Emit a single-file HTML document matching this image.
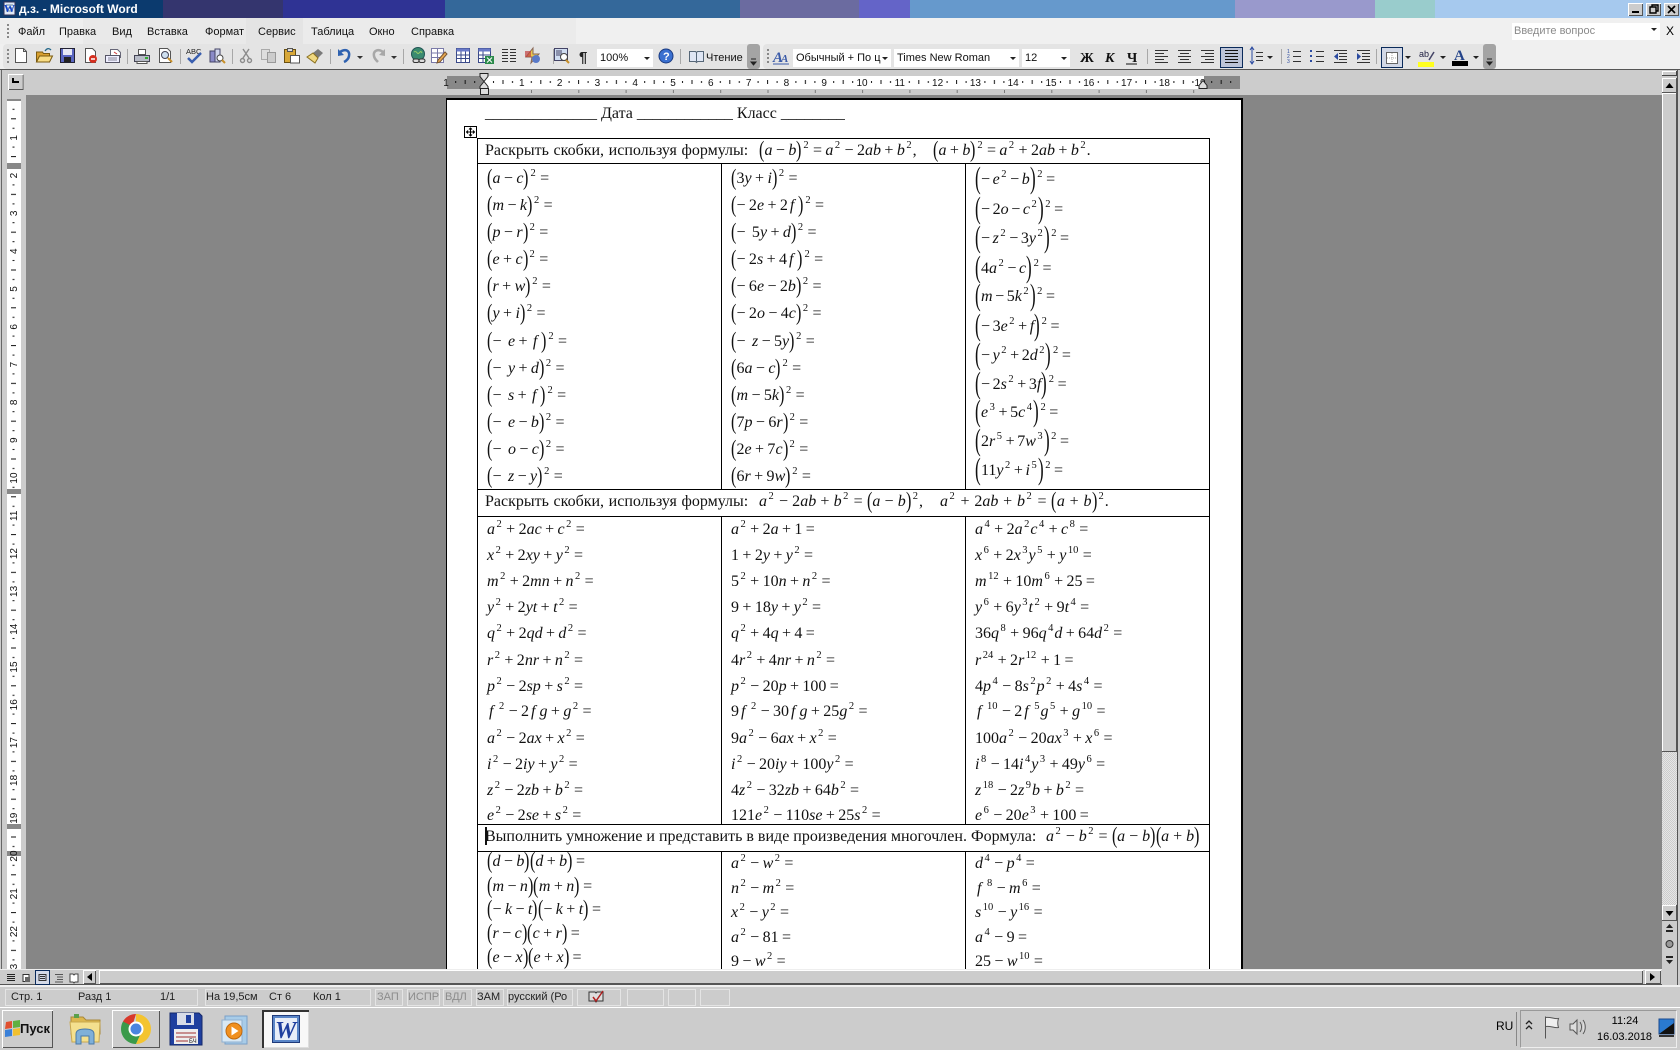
<!DOCTYPE html>
<html lang="ru"><head><meta charset="utf-8"><title>д.з. - Microsoft Word</title>
<style>
html,body{margin:0;padding:0}
body{width:1680px;height:1050px;overflow:hidden;position:relative;background:#ccc;font-family:"Liberation Sans",sans-serif;font-size:11px;color:#000}
.r{position:absolute}
.l{position:absolute;background:#000}
.t{position:absolute;white-space:nowrap}
.f{position:absolute;margin-top:1px;font:16px/20px "Liberation Serif",serif;white-space:nowrap;word-spacing:-.6px;color:#111}
.f sup{font-size:10.5px;line-height:0;vertical-align:7px;margin:0 1px 0 1.5px}
.f u{text-decoration:none;display:inline-block;font-size:23px;line-height:0;width:5.5px;transform:scaleX(.7);transform-origin:0 50%;vertical-align:-2px;font-weight:normal}
.f em{font-style:italic;margin:0 4px 0 2px}
.f s{text-decoration:none;margin-right:3px}
.g{word-spacing:-1.400px}
.g u{font-size:31px;width:6px;transform:scaleX(.55);vertical-align:-4px}
.a,.b,.c{margin-top:2px}
.a{left:487px}.b{left:731px}.c{left:975px}
.st{position:absolute;top:989px;height:15px;border:1px solid #e4e4e4;box-sizing:content-box}
.sx{position:absolute;top:991px;color:#222;font-size:11px;line-height:13px;white-space:nowrap}
.off{color:#8c8c8c}
.mn{position:absolute;top:25px;font-size:11px;line-height:14px;color:#111}
.btn{position:absolute;background:#ccc;box-shadow:inset 1px 1px 0 #fff,inset -1px -1px 0 #555}
.cb{position:absolute;background:#fff;top:49px;height:18px;font-size:11px;line-height:18px;white-space:nowrap;overflow:hidden;color:#111}
</style></head><body>

<!-- title bar -->
<div class="r" style="left:0;top:0;width:163px;height:18px;background:#0b3a6e"></div>
<div class="r" style="left:163px;top:0;width:120px;height:18px;background:#34356e"></div>
<div class="r" style="left:283px;top:0;width:162px;height:18px;background:#2f3394"></div>
<div class="r" style="left:445px;top:0;width:295px;height:18px;background:#34689a"></div>
<div class="r" style="left:740px;top:0;width:119px;height:18px;background:#6b6ba0"></div>
<div class="r" style="left:859px;top:0;width:51px;height:18px;background:#6464c8"></div>
<div class="r" style="left:910px;top:0;width:325px;height:18px;background:#6699cc"></div>
<div class="r" style="left:1235px;top:0;width:140px;height:18px;background:#9999cc"></div>
<div class="r" style="left:1375px;top:0;width:60px;height:18px;background:#99cccc"></div>
<div class="r" style="left:1435px;top:0;width:245px;height:18px;background:#a6c9ee"></div>
<div class="t" style="left:19px;top:1px;color:#fff;font-weight:bold;font-size:12px;line-height:16px">д.з. - Microsoft Word</div>
<div class="btn" style="left:1628px;top:3px;width:15px;height:13px"></div>
<div class="btn" style="left:1646px;top:3px;width:15px;height:13px"></div>
<div class="btn" style="left:1664px;top:3px;width:15px;height:13px"></div>

<!-- menu row and toolbars -->
<div class="r" style="left:0;top:18px;width:1680px;height:52px;background:#f0f0f0"></div>
<div class="r" style="left:0;top:18px;width:83px;height:26px;background:#eee"></div>
<div class="r" style="left:83px;top:18px;width:163px;height:26px;background:#e9e9e9"></div>
<div class="r" style="left:246px;top:18px;width:57px;height:26px;background:#e4e4e4"></div>
<div class="r" style="left:303px;top:18px;width:273px;height:26px;background:#ebebeb"></div>
<div class="r" style="left:3px;top:44px;width:757px;height:25px;background:#e4e4e4;border-radius:4px"></div>
<div class="r" style="left:747px;top:44px;width:13px;height:25px;background:#a4a4a4;border-radius:3px"></div>
<div class="r" style="left:763px;top:44px;width:733px;height:25px;background:#e4e4e4;border-radius:4px"></div>
<div class="r" style="left:1483px;top:44px;width:13px;height:25px;background:#a4a4a4;border-radius:3px"></div>

<div class="mn" style="left:18px">Файл</div>
<div class="mn" style="left:59px">Правка</div>
<div class="mn" style="left:112px">Вид</div>
<div class="mn" style="left:147px">Вставка</div>
<div class="mn" style="left:205px">Формат</div>
<div class="mn" style="left:258px">Сервис</div>
<div class="mn" style="left:311px">Таблица</div>
<div class="mn" style="left:369px">Окно</div>
<div class="mn" style="left:411px">Справка</div>
<div class="r" style="left:1512px;top:23px;width:148px;height:17px;background:#fff"></div>
<div class="t" style="left:1514px;top:24px;color:#8a8a8a;line-height:15px">Введите вопрос</div>
<div class="t" style="left:1666px;top:24px;line-height:15px;font-size:12px">X</div>

<div class="cb" style="left:597px;width:56px;padding-left:3px;box-sizing:border-box">100%</div>
<div class="t" style="left:706px;top:50px;line-height:16px;color:#111">Чтение</div>
<div class="cb" style="left:793px;width:98px;padding-left:3px;box-sizing:border-box">Обычный + По ц</div>
<div class="cb" style="left:894px;width:125px;padding-left:3px;box-sizing:border-box">Times New Roman</div>
<div class="cb" style="left:1022px;width:48px;padding-left:3px;box-sizing:border-box">12</div>

<svg class="r" style="left:0;top:0" width="1680" height="70" xmlns="http://www.w3.org/2000/svg">
<!-- title icon and buttons -->
<g transform="translate(3,1)"><rect x="1" y="1" width="11" height="13" fill="#dfe8f8" stroke="#335"/><path d="M3 4h7M3 7h7M3 10h7" stroke="#689"/><text x="1" y="11" font-family="Liberation Serif" font-weight="bold" font-size="11" fill="#14c">W</text></g>
<path d="M1632 12h7" stroke="#000" stroke-width="2"/>
<path d="M1650 7h6v6h-6zM1652 7V5h6v6h-2" fill="none" stroke="#000" stroke-width="1.4"/>
<path d="M1668 6l7 7m0-7l-7 7" stroke="#000" stroke-width="1.6"/>
<!-- grips -->
<g fill="#888"><rect x="7" y="24" width="2" height="2"/><rect x="7" y="28" width="2" height="2"/><rect x="7" y="32" width="2" height="2"/><rect x="7" y="36" width="2" height="2"/>
<rect x="7" y="49" width="2" height="2"/><rect x="7" y="53" width="2" height="2"/><rect x="7" y="57" width="2" height="2"/><rect x="7" y="61" width="2" height="2"/>
<rect x="767" y="49" width="2" height="2"/><rect x="767" y="53" width="2" height="2"/><rect x="767" y="57" width="2" height="2"/><rect x="767" y="61" width="2" height="2"/></g>
<path d="M751 62h5l-2.5 3zM751 59h5M1487 62h5l-2.5 3zM1487 59h5" stroke="#222" fill="#222"/>
<!-- separators -->
<g stroke="#a8a8a8"><path d="M127.500 49v15M180.500 49v15M232.500 49v15M330.500 49v15M403.500 49v15M680.500 49v15M1147.500 49v15M1281.500 49v15M1376.500 49v15M553.500 49v15"/></g>
<!-- new -->
<g transform="translate(14,48)"><path d="M1.500.5h8l3 3v11h-11z" fill="#fff" stroke="#555"/><path d="M9.500.5v3h3" fill="none" stroke="#555"/></g>
<!-- open -->
<g transform="translate(36,48)"><path d="M.5 14V4h6l1 1.500h6V14z" fill="#d8a030" stroke="#7a5a10"/><path d="M.5 14l3-6h13l-3 6z" fill="#f8dc84" stroke="#7a5a10"/><path d="M9 3c2-3 4-3 6-1" fill="none" stroke="#268" stroke-width="1.300"/></g>
<!-- save -->
<g transform="translate(60,48)"><rect x=".5" y=".5" width="14" height="14" fill="#5a66c0" stroke="#223"/><rect x="3" y="1" width="9" height="6" fill="#e6e8f4"/><rect x="4" y="9" width="7" height="5" fill="#222"/></g>
<!-- perm -->
<g transform="translate(84,48)"><path d="M1.500.5h7l3 3v11h-10z" fill="#fff" stroke="#555"/><circle cx="9" cy="11" r="4" fill="#d43020"/><path d="M7 11h4" stroke="#fff" stroke-width="1.500"/></g>
<!-- mail -->
<g transform="translate(105,48)"><path d="M5.500 1.500h7l3 3v5h-10z" fill="#fff" stroke="#667"/><path d="M9 4l3 2" stroke="#c33"/><rect x=".5" y="7.500" width="14" height="7" fill="#eef" stroke="#556"/><path d="M3 10h9M3 12h9" stroke="#889"/></g>
<!-- print -->
<g transform="translate(134,48)"><path d="M4.500 1.500h7v5h-7z" fill="#fff" stroke="#555"/><path d="M.5 7.500h15v6h-15z" fill="#b8bcc8" stroke="#445"/><path d="M3 13.500h10v2H3z" fill="#fff" stroke="#555"/><rect x="11" y="9" width="3" height="2" fill="#3a3"/></g>
<!-- preview -->
<g transform="translate(158,48)"><path d="M1.500.5h8l3 3v11h-11z" fill="#fff" stroke="#555"/><circle cx="7" cy="7" r="3.500" fill="#cfe0f0" stroke="#445"/><path d="M10 10l4 4" stroke="#c8902a" stroke-width="2"/></g>
<!-- spell -->
<g transform="translate(186,47)"><text x="0" y="7" font-family="Liberation Sans" font-size="7.500" fill="#222">ABC</text><path d="M2 11l4 4 9-9" fill="none" stroke="#3a5fb0" stroke-width="2.500"/></g>
<!-- research -->
<g transform="translate(209,48)"><rect x="1" y="3" width="5" height="11" fill="#8a8ac8" stroke="#446"/><rect x="6" y="1" width="5" height="13" fill="#cfd4ec" stroke="#446"/><circle cx="11" cy="10" r="3" fill="#fff" stroke="#444"/><path d="M13 12l3 3" stroke="#c8902a" stroke-width="2"/></g>
<!-- cut -->
<g transform="translate(240,48)" fill="none" stroke="#8c8c8c" stroke-width="1.400"><path d="M3 1l6 9M9 1L3 10"/><circle cx="2.500" cy="12.500" r="2"/><circle cx="9.500" cy="12.500" r="2"/></g>
<!-- copy -->
<g transform="translate(261,48)"><rect x=".5" y="1.500" width="8" height="10" fill="#ddd" stroke="#aaa"/><rect x="6.500" y="4.500" width="8" height="10" fill="#ccc" stroke="#999"/></g>
<!-- paste -->
<g transform="translate(284,48)"><rect x=".5" y="1.500" width="11" height="13" fill="#d8a838" stroke="#6a5010"/><rect x="3.500" y=".5" width="5" height="3" fill="#ddd" stroke="#555"/><rect x="6.500" y="7.500" width="9" height="7.500" fill="#fff" stroke="#555"/></g>
<!-- painter -->
<g transform="translate(307,48)"><path d="M11 1l5 4-5 5-5-5z" fill="#7a7a7a"/><path d="M6 5l5 5-3 5-8-6z" fill="#f0d880" stroke="#8a7020"/></g>
<!-- undo -->
<g transform="translate(337,48)"><path d="M3 4c6-4 10-1 9 4-.5 3-3 5-5 6" fill="none" stroke="#2f62b0" stroke-width="2.500"/><path d="M1 1l0 7 6-1z" fill="#2f62b0"/></g>
<path d="M357 56h6l-3 3zM391 56h6l-3 3z" fill="#333"/>
<!-- redo -->
<g transform="translate(372,48)"><path d="M11 4C6 0 1 3 2 8c.5 3 3 5 4 6" fill="none" stroke="#a8a8a8" stroke-width="2.500"/><path d="M13 1v7l-6-1z" fill="#a8a8a8"/></g>
<!-- hyperlink -->
<g transform="translate(411,47)"><circle cx="7" cy="7" r="6.500" fill="#3a8a70" stroke="#255"/><path d="M3 5c3-2 3 3 5 1s2-2 3 0" fill="none" stroke="#9c6"/><rect x="2" y="12" width="6" height="3.500" rx="1.700" fill="#ddd" stroke="#333"/><rect x="8" y="12" width="6" height="3.500" rx="1.700" fill="#ddd" stroke="#333"/></g>
<!-- tables & borders -->
<g transform="translate(431,48)"><path d="M.5.5h12v14H.5zM.5 5h12M.5 9.500h12M6.500.5v14" fill="#fff" stroke="#7a7aa8"/><path d="M7 12l7-8 2 2-7 8-3 1z" fill="#e8a850" stroke="#753"/></g>
<!-- table -->
<g transform="translate(456,48)"><path d="M.5.5h13v14H.5z" fill="#fff" stroke="#3a4a8a"/><path d="M.5.5h13v3H.5z" fill="#6a7ac8"/><path d="M.5 7h13M.5 10.500h13M5 3.500v11M9.500 3.500v11" stroke="#3a4a8a"/></g>
<!-- excel -->
<g transform="translate(478,48)"><path d="M.5.5h12v14H.5z" fill="#fff" stroke="#3a4a8a"/><path d="M.5.5h12v3H.5z" fill="#6a7ac8"/><path d="M.5 7h12M.5 10.500h12M5 3.500v11" stroke="#3a4a8a"/><rect x="7" y="8" width="9" height="8" fill="#2a8a4a"/><path d="M9 9.500l5 5m0-5l-5 5" stroke="#fff"/></g>
<!-- columns -->
<g transform="translate(502,49)" stroke="#333"><path d="M0 .5h6M8 .5h6M0 3.500h6M8 3.500h6M0 6.500h6M8 6.500h6M0 9.500h6M8 9.500h6M0 12.500h6M8 12.500h6"/></g>
<!-- drawing -->
<g transform="translate(525,48)"><path d="M8 0l-7 9h6l-1 6 8-9H8z" fill="#e8c850" stroke="#865"/><circle cx="11" cy="11" r="4" fill="#5a7ac8"/><rect x="0" y="3" width="6" height="6" fill="#c04040" opacity=".7"/></g>
<!-- doc map -->
<g transform="translate(554,48)"><rect x=".5" y=".5" width="13" height="12" fill="#cfdcf0" stroke="#446"/><path d="M2 3h6M2 5h6M2 7h6" stroke="#446"/><circle cx="10" cy="9" r="3.500" fill="#fff" stroke="#444"/><path d="M12 12l3 3" stroke="#c8902a" stroke-width="2"/></g>
<text x="579" y="62" font-family="Liberation Sans" font-size="15" font-weight="bold" fill="#222">¶</text>
<path d="M644 57h6l-3 3z" fill="#222"/>
<!-- help -->
<circle cx="666" cy="56" r="7" fill="#3a70d0" stroke="#1a3a80"/><text x="663" y="60" font-family="Liberation Sans" font-size="11" font-weight="bold" fill="#fff">?</text>
<!-- reading -->
<g transform="translate(689,50)"><path d="M.5 1.500h6l1 1 1-1h6v10h-6l-1 1-1-1h-6z" fill="#dfe6f4" stroke="#567"/><path d="M7.500 2.500v9" stroke="#567"/></g>
<!-- style AA -->
<text x="773" y="62" font-family="Liberation Serif" font-style="italic" font-size="15" font-weight="bold" fill="#3a5aa8">A</text><text x="781" y="62" font-family="Liberation Serif" font-style="italic" font-size="11" font-weight="bold" fill="#3a5aa8">A</text><path d="M773 64h16" stroke="#3a5aa8"/>
<path d="M882 57h6l-3 3zM1010 57h6l-3 3zM1061 57h6l-3 3z" fill="#222"/>
<!-- B I U -->
<text x="1080" y="62" font-family="Liberation Serif" font-size="14" font-weight="bold" fill="#111">Ж</text>
<text x="1105" y="62" font-family="Liberation Serif" font-size="14" font-weight="bold" font-style="italic" fill="#111">К</text>
<text x="1127" y="62" font-family="Liberation Serif" font-size="14" font-weight="bold" fill="#111">Ч</text><path d="M1126 64h11" stroke="#111"/>
<!-- align -->
<g stroke="#333"><path d="M1155 50.500h13M1155 53.500h9M1155 56.500h13M1155 59.500h9M1155 62.500h13"/>
<path d="M1178 50.500h13M1180 53.500h9M1178 56.500h13M1180 59.500h9M1178 62.500h13"/>
<path d="M1201 50.500h13M1205 53.500h9M1201 56.500h13M1205 59.500h9M1201 62.500h13"/></g>
<rect x="1220.500" y="47.500" width="22" height="20" fill="#bcc4d8" stroke="#0a2a5a"/>
<path d="M1225 50.500h13M1225 53.500h13M1225 56.500h13M1225 59.500h13M1225 62.500h13" stroke="#111"/>
<!-- line spacing -->
<path d="M1250 50l2-3 2 3M1252 48v16M1250 61l2 3 2-3" fill="none" stroke="#2a4aa0"/><path d="M1256 52.500h7M1256 56.500h7M1256 60.500h7" stroke="#333"/><path d="M1267 56h6l-3 3z" fill="#222"/>
<!-- lists -->
<path d="M1293 51.500h8M1293 56.500h8M1293 61.500h8M1316 51.500h8M1316 56.500h8M1316 61.500h8" stroke="#333"/>
<g font-family="Liberation Sans" font-size="5" fill="#2a4aa0"><text x="1287" y="53">1</text><text x="1287" y="58">2</text><text x="1287" y="63">3</text></g>
<g fill="#2a4aa0"><rect x="1310" y="50" width="2" height="2"/><rect x="1310" y="55" width="2" height="2"/><rect x="1310" y="60" width="2" height="2"/></g>
<!-- outdent indent -->
<path d="M1334 50.500h13M1339 53.500h8M1339 56.500h8M1339 59.500h8M1334 62.500h13M1357 50.500h13M1362 53.500h8M1362 56.500h8M1362 59.500h8M1357 62.500h13" stroke="#333"/>
<path d="M1338 53l-4 3.500 4 3.500zM1357 53l4 3.500-4 3.500z" fill="#2a4aa0"/>
<!-- borders -->
<rect x="1381.500" y="47.500" width="21" height="20" fill="#d2d8e6" stroke="#0a2a5a"/><rect x="1386.500" y="52.500" width="11" height="11" fill="#fff" stroke="#666"/><path d="M1392 53v10M1387 58h10" stroke="#aaa" stroke-dasharray="1 1"/><path d="M1405 56h6l-3 3z" fill="#222"/>
<!-- highlight -->
<rect x="1418" y="62" width="16" height="5" fill="#ffff20"/><text x="1419" y="57" font-family="Liberation Sans" font-size="9" fill="#224">ab</text><path d="M1429 60l5-8" stroke="#446" stroke-width="1.500"/><path d="M1440 56h6l-3 3z" fill="#222"/>
<!-- font color -->
<text x="1454" y="60" font-family="Liberation Serif" font-size="15" font-weight="bold" fill="#24448a">A</text><rect x="1452" y="61" width="16" height="5" fill="#000"/><path d="M1473 56h6l-3 3z" fill="#222"/>
<path d="M1651 28h6l-3 3z" fill="#222"/>
</svg>

<!-- ruler band & doc -->
<div class="r" style="left:0;top:70px;width:1680px;height:915px;background:#ccc"></div>
<div class="r" style="left:0;top:69px;width:1680px;height:1px;background:#555"></div>
<div class="r" style="left:1px;top:70px;width:1px;height:915px;background:#666"></div>
<div class="r" style="left:26px;top:95px;width:1636px;height:874px;background:#868686"></div>

<!-- page -->
<div class="r" style="left:446px;top:98px;width:797px;height:871px;background:#fff;border-left:1px solid #000;border-top:2px solid #000;border-right:2px solid #000;box-sizing:border-box"></div>

<!-- table handle -->
<svg class="r" style="left:464px;top:126px" width="13" height="12"><rect x=".5" y=".5" width="12" height="11" fill="#fff" stroke="#000"/><path d="M6.500 2.500v7M3 6h7M5 3.500l1.500-1.500 1.500 1.500M5 8.500l1.500 1.500 1.500-1.500M4 4.500L2.500 6 4 7.500M9 4.500L10.500 6 9 7.500" fill="none" stroke="#000"/></svg>

<!-- table lines -->
<div class="l" style="left:477px;top:138px;width:733px;height:1px"></div>
<div class="l" style="left:477px;top:163px;width:733px;height:1px"></div>
<div class="l" style="left:477px;top:489px;width:733px;height:1px"></div>
<div class="l" style="left:477px;top:516px;width:733px;height:1px"></div>
<div class="l" style="left:477px;top:824px;width:733px;height:1px"></div>
<div class="l" style="left:477px;top:851px;width:733px;height:1px"></div>
<div class="l" style="left:477px;top:138px;width:1px;height:831px"></div>
<div class="l" style="left:1209px;top:138px;width:1px;height:831px"></div>
<div class="l" style="left:721px;top:163px;width:1px;height:326px"></div>
<div class="l" style="left:965px;top:163px;width:1px;height:326px"></div>
<div class="l" style="left:721px;top:516px;width:1px;height:308px"></div>
<div class="l" style="left:965px;top:516px;width:1px;height:308px"></div>
<div class="l" style="left:721px;top:851px;width:1px;height:118px"></div>
<div class="l" style="left:965px;top:851px;width:1px;height:118px"></div>

<!-- header line -->
<div class="f" style="left:485px;top:103px;word-spacing:0">______________ Дата ____________ Класс ________</div>

<!-- section 1 header -->
<div class="f" style="left:485px;top:140px;word-spacing:.6px">Раскрыть скобки, используя формулы:</div>
<div class="f" style="left:759px;top:140px"><u>(</u><i>a</i> − <i>b</i><u>)</u><sup>2</sup> = <i>a</i><sup>2</sup> − 2<i>ab</i> + <i>b</i><sup>2</sup>,</div>
<div class="f" style="left:933px;top:140px"><u>(</u><i>a</i> + <i>b</i><u>)</u><sup>2</sup> = <i>a</i><sup>2</sup> + 2<i>ab</i> + <i>b</i><sup>2</sup>.</div>

<!-- section 1 col 1 -->
<div class="f a" style="top:167px"><u>(</u><i>a</i> − <i>c</i><u>)</u><sup>2</sup> =</div>
<div class="f a" style="top:194px"><u>(</u><i>m</i> − <i>k</i><u>)</u><sup>2</sup> =</div>
<div class="f a" style="top:221px"><u>(</u><i>p</i> − <i>r</i><u>)</u><sup>2</sup> =</div>
<div class="f a" style="top:248px"><u>(</u><i>e</i> + <i>c</i><u>)</u><sup>2</sup> =</div>
<div class="f a" style="top:275px"><u>(</u><i>r</i> + <i>w</i><u>)</u><sup>2</sup> =</div>
<div class="f a" style="top:302px"><u>(</u><i>y</i> + <i>i</i><u>)</u><sup>2</sup> =</div>
<div class="f a" style="top:330px"><u>(</u><s>−</s> <i>e</i> + <em>f</em><u>)</u><sup>2</sup> =</div>
<div class="f a" style="top:357px"><u>(</u><s>−</s> <i>y</i> + <i>d</i><u>)</u><sup>2</sup> =</div>
<div class="f a" style="top:384px"><u>(</u><s>−</s> <i>s</i> + <em>f</em><u>)</u><sup>2</sup> =</div>
<div class="f a" style="top:411px"><u>(</u><s>−</s> <i>e</i> − <i>b</i><u>)</u><sup>2</sup> =</div>
<div class="f a" style="top:438px"><u>(</u><s>−</s> <i>o</i> − <i>c</i><u>)</u><sup>2</sup> =</div>
<div class="f a" style="top:465px"><u>(</u><s>−</s> <i>z</i> − <i>y</i><u>)</u><sup>2</sup> =</div>
<!-- section 1 col 2 -->
<div class="f b" style="top:167px"><u>(</u>3<i>y</i> + <i>i</i><u>)</u><sup>2</sup> =</div>
<div class="f b" style="top:194px"><u>(</u>− 2<i>e</i> + 2<em>f</em><u>)</u><sup>2</sup> =</div>
<div class="f b" style="top:221px"><u>(</u><s>−</s> 5<i>y</i> + <i>d</i><u>)</u><sup>2</sup> =</div>
<div class="f b" style="top:248px"><u>(</u>− 2<i>s</i> + 4<em>f</em><u>)</u><sup>2</sup> =</div>
<div class="f b" style="top:275px"><u>(</u>− 6<i>e</i> − 2<i>b</i><u>)</u><sup>2</sup> =</div>
<div class="f b" style="top:302px"><u>(</u>− 2<i>o</i> − 4<i>c</i><u>)</u><sup>2</sup> =</div>
<div class="f b" style="top:330px"><u>(</u><s>−</s> <i>z</i> − 5<i>y</i><u>)</u><sup>2</sup> =</div>
<div class="f b" style="top:357px"><u>(</u>6<i>a</i> − <i>c</i><u>)</u><sup>2</sup> =</div>
<div class="f b" style="top:384px"><u>(</u><i>m</i> − 5<i>k</i><u>)</u><sup>2</sup> =</div>
<div class="f b" style="top:411px"><u>(</u>7<i>p</i> − 6<i>r</i><u>)</u><sup>2</sup> =</div>
<div class="f b" style="top:438px"><u>(</u>2<i>e</i> + 7<i>c</i><u>)</u><sup>2</sup> =</div>
<div class="f b" style="top:465px"><u>(</u>6<i>r</i> + 9<i>w</i><u>)</u><sup>2</sup> =</div>
<!-- section 1 col 3 -->
<div class="f c g" style="top:168px"><u>(</u>− <i>e</i><sup>2</sup> − <i>b</i><u>)</u><sup>2</sup> =</div>
<div class="f c g" style="top:198px"><u>(</u>− 2<i>o</i> − <i>c</i><sup>2</sup><u>)</u><sup>2</sup> =</div>
<div class="f c g" style="top:227px"><u>(</u>− <i>z</i><sup>2</sup> − 3<i>y</i><sup>2</sup><u>)</u><sup>2</sup> =</div>
<div class="f c g" style="top:257px"><u>(</u>4<i>a</i><sup>2</sup> − <i>c</i><u>)</u><sup>2</sup> =</div>
<div class="f c g" style="top:285px"><u>(</u><i>m</i> − 5<i>k</i><sup>2</sup><u>)</u><sup>2</sup> =</div>
<div class="f c g" style="top:315px"><u>(</u>− 3<i>e</i><sup>2</sup> + <i>f</i><u>)</u><sup>2</sup> =</div>
<div class="f c g" style="top:344px"><u>(</u>− <i>y</i><sup>2</sup> + 2<i>d</i><sup>2</sup><u>)</u><sup>2</sup> =</div>
<div class="f c g" style="top:373px"><u>(</u>− 2<i>s</i><sup>2</sup> + 3<i>f</i><u>)</u><sup>2</sup> =</div>
<div class="f c g" style="top:401px"><u>(</u><i>e</i><sup>3</sup> + 5<i>c</i><sup>4</sup><u>)</u><sup>2</sup> =</div>
<div class="f c g" style="top:430px"><u>(</u>2<i>r</i><sup>5</sup> + 7<i>w</i><sup>3</sup><u>)</u><sup>2</sup> =</div>
<div class="f c g" style="top:459px"><u>(</u>11<i>y</i><sup>2</sup> + <i>i</i><sup>5</sup><u>)</u><sup>2</sup> =</div>

<!-- section 2 header -->
<div class="f" style="left:485px;top:491px;word-spacing:.6px">Раскрыть скобки, используя формулы:</div>
<div class="f" style="left:759px;top:491px;word-spacing:.2px"><i>a</i><sup>2</sup> − 2<i>ab</i> + <i>b</i><sup>2</sup> = <u>(</u><i>a</i> − <i>b</i><u>)</u><sup>2</sup>,</div>
<div class="f" style="left:940px;top:491px;word-spacing:.8px"><i>a</i><sup>2</sup> + 2<i>ab</i> + <i>b</i><sup>2</sup> = <u>(</u><i>a</i> + <i>b</i><u>)</u><sup>2</sup>.</div>

<!-- section 2 col 1 -->
<div class="f a" style="top:518px"><i>a</i><sup>2</sup> + 2<i>ac</i> + <i>c</i><sup>2</sup> =</div>
<div class="f a" style="top:544px"><i>x</i><sup>2</sup> + 2<i>xy</i> + <i>y</i><sup>2</sup> =</div>
<div class="f a" style="top:570px"><i>m</i><sup>2</sup> + 2<i>mn</i> + <i>n</i><sup>2</sup> =</div>
<div class="f a" style="top:596px"><i>y</i><sup>2</sup> + 2<i>yt</i> + <i>t</i><sup>2</sup> =</div>
<div class="f a" style="top:622px"><i>q</i><sup>2</sup> + 2<i>qd</i> + <i>d</i><sup>2</sup> =</div>
<div class="f a" style="top:649px"><i>r</i><sup>2</sup> + 2<i>nr</i> + <i>n</i><sup>2</sup> =</div>
<div class="f a" style="top:675px"><i>p</i><sup>2</sup> − 2<i>sp</i> + <i>s</i><sup>2</sup> =</div>
<div class="f a" style="top:700px"><em>f</em><sup>2</sup> − 2<em>f</em><i>g</i> + <i>g</i><sup>2</sup> =</div>
<div class="f a" style="top:727px"><i>a</i><sup>2</sup> − 2<i>ax</i> + <i>x</i><sup>2</sup> =</div>
<div class="f a" style="top:753px"><i>i</i><sup>2</sup> − 2<i>iy</i> + <i>y</i><sup>2</sup> =</div>
<div class="f a" style="top:779px"><i>z</i><sup>2</sup> − 2<i>zb</i> + <i>b</i><sup>2</sup> =</div>
<div class="f a" style="top:804px"><i>e</i><sup>2</sup> − 2<i>se</i> + <i>s</i><sup>2</sup> =</div>
<!-- section 2 col 2 -->
<div class="f b" style="top:518px"><i>a</i><sup>2</sup> + 2<i>a</i> + 1 =</div>
<div class="f b" style="top:544px">1 + 2<i>y</i> + <i>y</i><sup>2</sup> =</div>
<div class="f b" style="top:570px">5<sup>2</sup> + 10<i>n</i> + <i>n</i><sup>2</sup> =</div>
<div class="f b" style="top:596px">9 + 18<i>y</i> + <i>y</i><sup>2</sup> =</div>
<div class="f b" style="top:622px"><i>q</i><sup>2</sup> + 4<i>q</i> + 4 =</div>
<div class="f b" style="top:649px">4<i>r</i><sup>2</sup> + 4<i>nr</i> + <i>n</i><sup>2</sup> =</div>
<div class="f b" style="top:675px"><i>p</i><sup>2</sup> − 20<i>p</i> + 100 =</div>
<div class="f b" style="top:700px">9<em>f</em><sup>2</sup> − 30<em>f</em><i>g</i> + 25<i>g</i><sup>2</sup> =</div>
<div class="f b" style="top:727px">9<i>a</i><sup>2</sup> − 6<i>ax</i> + <i>x</i><sup>2</sup> =</div>
<div class="f b" style="top:753px"><i>i</i><sup>2</sup> − 20<i>iy</i> + 100<i>y</i><sup>2</sup> =</div>
<div class="f b" style="top:779px">4<i>z</i><sup>2</sup> − 32<i>zb</i> + 64<i>b</i><sup>2</sup> =</div>
<div class="f b" style="top:804px">121<i>e</i><sup>2</sup> − 110<i>se</i> + 25<i>s</i><sup>2</sup> =</div>
<!-- section 2 col 3 -->
<div class="f c" style="top:518px"><i>a</i><sup>4</sup> + 2<i>a</i><sup>2</sup><i>c</i><sup>4</sup> + <i>c</i><sup>8</sup> =</div>
<div class="f c" style="top:544px"><i>x</i><sup>6</sup> + 2<i>x</i><sup>3</sup><i>y</i><sup>5</sup> + <i>y</i><sup>10</sup> =</div>
<div class="f c" style="top:570px"><i>m</i><sup>12</sup> + 10<i>m</i><sup>6</sup> + 25 =</div>
<div class="f c" style="top:596px"><i>y</i><sup>6</sup> + 6<i>y</i><sup>3</sup><i>t</i><sup>2</sup> + 9<i>t</i><sup>4</sup> =</div>
<div class="f c" style="top:622px">36<i>q</i><sup>8</sup> + 96<i>q</i><sup>4</sup><i>d</i> + 64<i>d</i><sup>2</sup> =</div>
<div class="f c" style="top:649px"><i>r</i><sup>24</sup> + 2<i>r</i><sup>12</sup> + 1 =</div>
<div class="f c" style="top:675px">4<i>p</i><sup>4</sup> − 8<i>s</i><sup>2</sup><i>p</i><sup>2</sup> + 4<i>s</i><sup>4</sup> =</div>
<div class="f c" style="top:700px"><em>f</em><sup>10</sup> − 2<em>f</em><sup>5</sup><i>g</i><sup>5</sup> + <i>g</i><sup>10</sup> =</div>
<div class="f c" style="top:727px">100<i>a</i><sup>2</sup> − 20<i>ax</i><sup>3</sup> + <i>x</i><sup>6</sup> =</div>
<div class="f c" style="top:753px"><i>i</i><sup>8</sup> − 14<i>i</i><sup>4</sup><i>y</i><sup>3</sup> + 49<i>y</i><sup>6</sup> =</div>
<div class="f c" style="top:779px"><i>z</i><sup>18</sup> − 2<i>z</i><sup>9</sup><i>b</i> + <i>b</i><sup>2</sup> =</div>
<div class="f c" style="top:804px"><i>e</i><sup>6</sup> − 20<i>e</i><sup>3</sup> + 100 =</div>

<!-- section 3 header -->
<div class="r" style="left:485px;top:827px;width:2px;height:18px;background:#111"></div>
<div class="f" style="left:485px;top:826px;word-spacing:0">Выполнить умножение и представить в виде произведения многочлен. Формула:</div>
<div class="f" style="left:1046px;top:826px;word-spacing:0"><i>a</i><sup>2</sup> − <i>b</i><sup>2</sup> = <u>(</u><i>a</i> − <i>b</i><u>)</u><u>(</u><i>a</i> + <i>b</i><u>)</u></div>

<!-- section 3 -->
<div class="f a" style="top:850px"><u>(</u><i>d</i> − <i>b</i><u>)</u><u>(</u><i>d</i> + <i>b</i><u>)</u> =</div>
<div class="f a" style="top:875px"><u>(</u><i>m</i> − <i>n</i><u>)</u><u>(</u><i>m</i> + <i>n</i><u>)</u> =</div>
<div class="f a" style="top:898px"><u>(</u>− <i>k</i> − <i>t</i><u>)</u><u>(</u>− <i>k</i> + <i>t</i><u>)</u> =</div>
<div class="f a" style="top:922px"><u>(</u><i>r</i> − <i>c</i><u>)</u><u>(</u><i>c</i> + <i>r</i><u>)</u> =</div>
<div class="f a" style="top:946px"><u>(</u><i>e</i> − <i>x</i><u>)</u><u>(</u><i>e</i> + <i>x</i><u>)</u> =</div>
<div class="f b" style="top:852px"><i>a</i><sup>2</sup> − <i>w</i><sup>2</sup> =</div>
<div class="f b" style="top:877px"><i>n</i><sup>2</sup> − <i>m</i><sup>2</sup> =</div>
<div class="f b" style="top:901px"><i>x</i><sup>2</sup> − <i>y</i><sup>2</sup> =</div>
<div class="f b" style="top:926px"><i>a</i><sup>2</sup> − 81 =</div>
<div class="f b" style="top:950px">9 − <i>w</i><sup>2</sup> =</div>
<div class="f c" style="top:852px"><i>d</i><sup>4</sup> − <i>p</i><sup>4</sup> =</div>
<div class="f c" style="top:877px"><em>f</em><sup>8</sup> − <i>m</i><sup>6</sup> =</div>
<div class="f c" style="top:901px"><i>s</i><sup>10</sup> − <i>y</i><sup>16</sup> =</div>
<div class="f c" style="top:926px"><i>a</i><sup>4</sup> − 9 =</div>
<div class="f c" style="top:950px">25 − <i>w</i><sup>10</sup> =</div>

<!-- horizontal ruler -->
<svg class="r" style="left:0;top:70px" width="1680" height="26">
<defs><pattern id="hr" x="484" y="0" width="37.800" height="26" patternUnits="userSpaceOnUse"><rect x="9" y="11" width="1" height="2" fill="#111"/><rect x="18.500" y="10" width="1" height="4" fill="#111"/><rect x="28" y="11" width="1" height="2" fill="#111"/></pattern>
<pattern id="ht" x="531" y="0" width="47.300" height="26" patternUnits="userSpaceOnUse"><rect x="0" y="20" width="1" height="3" fill="#777"/></pattern></defs>
<rect x="447" y="6" width="37" height="13" fill="#888"/><rect x="484" y="6" width="720" height="13" fill="#fff"/><rect x="1204" y="6" width="36" height="13" fill="#888"/>
<rect x="447" y="6" width="793" height="13" fill="url(#hr)"/>
<rect x="531" y="19" width="664" height="7" fill="url(#ht)"/>
<g font-family="Liberation Sans" font-size="10" text-anchor="middle" fill="#111">
<text x="446" y="16">1</text><text x="521.800" y="16">1</text><text x="559.600" y="16">2</text><text x="597.400" y="16">3</text><text x="635.200" y="16">4</text><text x="673" y="16">5</text><text x="710.800" y="16">6</text><text x="748.600" y="16">7</text><text x="786.400" y="16">8</text><text x="824.200" y="16">9</text><text x="862" y="16">10</text><text x="899.800" y="16">11</text><text x="937.600" y="16">12</text><text x="975.400" y="16">13</text><text x="1013.200" y="16">14</text><text x="1051" y="16">15</text><text x="1088.800" y="16">16</text><text x="1126.600" y="16">17</text><text x="1164.400" y="16">18</text><text x="1200" y="16">19</text></g>
<path d="M480 3.500h8v3l-4 5-4-5zM484 11.500l4 5v2h-8v-2z" fill="#ddd" stroke="#222"/><rect x="480.500" y="18.500" width="8" height="6" fill="#ddd" stroke="#222"/>
<path d="M1199 18.500v-3l4-5 4 5v3z" fill="#ddd" stroke="#222"/>
<!-- tab corner -->
<rect x="8.500" y="4.500" width="14" height="15" fill="#ccc" stroke="#fff"/><path d="M9 19.500h14V5" fill="none" stroke="#555"/><path d="M12 8v5h7v-2h-5V8z" fill="#000"/>
</svg>

<!-- vertical ruler -->
<svg class="r" style="left:6px;top:96px" width="16" height="874">
<defs><pattern id="vr" x="0" y="3.800" width="16" height="37.800" patternUnits="userSpaceOnUse"><rect x="6.500" y="9" width="2" height="1" fill="#111"/><rect x="5" y="18.500" width="5" height="1" fill="#111"/><rect x="6.500" y="28" width="2" height="1" fill="#111"/></pattern></defs>
<rect x="1" y="3" width="14" height="871" fill="#fff"/>
<rect x="1" y="3" width="14" height="871" fill="url(#vr)"/>
<rect x="1" y="3" width="14" height="2" fill="#888"/><rect x="1" y="67" width="14" height="6" fill="#888"/><rect x="1" y="393" width="14" height="5" fill="#888"/><rect x="1" y="728" width="14" height="5" fill="#888"/><rect x="1" y="755" width="14" height="5" fill="#888"/>
<g font-family="Liberation Sans" font-size="10" text-anchor="middle" fill="#111">
<text transform="translate(11,41.800) rotate(-90)">1</text><text transform="translate(11,79.600) rotate(-90)">2</text><text transform="translate(11,117.400) rotate(-90)">3</text><text transform="translate(11,155.200) rotate(-90)">4</text><text transform="translate(11,193) rotate(-90)">5</text><text transform="translate(11,230.800) rotate(-90)">6</text><text transform="translate(11,268.600) rotate(-90)">7</text><text transform="translate(11,306.400) rotate(-90)">8</text><text transform="translate(11,344.200) rotate(-90)">9</text><text transform="translate(11,382) rotate(-90)">10</text><text transform="translate(11,419.800) rotate(-90)">11</text><text transform="translate(11,457.600) rotate(-90)">12</text><text transform="translate(11,495.400) rotate(-90)">13</text><text transform="translate(11,533.200) rotate(-90)">14</text><text transform="translate(11,571) rotate(-90)">15</text><text transform="translate(11,608.800) rotate(-90)">16</text><text transform="translate(11,646.600) rotate(-90)">17</text><text transform="translate(11,684.400) rotate(-90)">18</text><text transform="translate(11,722.200) rotate(-90)">19</text><text transform="translate(11,760) rotate(-90)">20</text><text transform="translate(11,797.800) rotate(-90)">21</text><text transform="translate(11,835.600) rotate(-90)">22</text><text transform="translate(11,873.400) rotate(-90)">23</text></g>
</svg>

<!-- vertical scrollbar -->
<svg class="r" style="left:1662px;top:70px" width="18" height="915">
<defs><pattern id="ck" width="2" height="2" patternUnits="userSpaceOnUse"><rect width="2" height="2" fill="#e6e6e6"/><rect width="1" height="1" fill="#ccc"/><rect x="1" y="1" width="1" height="1" fill="#ccc"/></pattern></defs>
<rect x="0" y="0" width="15" height="915" fill="#ccc"/>
<rect x=".5" y="1.500" width="14" height="4" fill="#ccc" stroke="#fff"/><path d="M0 5.500h15M14.500 1v5" stroke="#444"/>
<rect x=".5" y="8.500" width="14" height="14" fill="#ccc" stroke="#fff"/><path d="M0 22.500h15M14.500 8v15" stroke="#555"/><path d="M3.500 18h8l-4-5z" fill="#000"/>
<rect x=".5" y="23.500" width="14" height="658" fill="#ccc" stroke="#fff"/><path d="M0 681.500h15M14.500 23v659" stroke="#555"/>
<rect x="0" y="682" width="15" height="153" fill="url(#ck)"/>
<rect x=".5" y="835.500" width="14" height="15" fill="#ccc" stroke="#fff"/><path d="M0 850.500h15M14.500 835v16" stroke="#555"/><path d="M3.500 841h8l-4 5z" fill="#000"/>
<path d="M15.500 0v915" stroke="#555"/>
<path d="M4 858h7l-3.500-4zM4 862h7v-2H4z" fill="#222"/>
<circle cx="7.500" cy="874" r="3.500" fill="#999" stroke="#333"/>
<path d="M4 886h7v2H4zM4 890h7l-3.500 4z" fill="#222"/>
</svg>

<!-- horizontal scrollbar -->
<div class="r" style="left:0;top:969px;width:1662px;height:16px;background:#ccc"></div>
<div class="r" style="left:0;top:969px;width:1662px;height:1px;background:#eee"></div>
<div class="r" style="left:99px;top:970px;width:1544px;height:14px;background:#ccc;box-shadow:inset 1px 1px 0 #fff,inset -1px -1px 0 #555"></div>
<div class="r" style="left:0;top:984px;width:1662px;height:1px;background:#555"></div>
<div class="btn" style="left:83px;top:970px;width:13px;height:14px"></div>
<div class="btn" style="left:1645px;top:970px;width:16px;height:14px"></div>
<svg class="r" style="left:0;top:969px" width="1680" height="16">
<rect x="35.500" y="1.500" width="14" height="14" fill="#d4dae8" stroke="#0a2a5a"/><path d="M39 5.500h7v6h-7zM40 7.500h5M40 9.500h5" fill="none" stroke="#333"/>
<path d="M7 5.500h8M7 7.500h8M7 9.500h8M7 11.500h8" stroke="#222"/>
<path d="M23 5.500h6v7h-6z" fill="#fff" stroke="#333"/><rect x="25" y="8" width="5" height="5" fill="#666"/>
<path d="M55 5.500h8M57 8h6M57 10.500h6M55 13h8" stroke="#555"/>
<path d="M70 5h3l1 1 1-1h3v8h-3l-1 1-1-1h-3z" fill="#fff" stroke="#444"/>
<path d="M92 4v8l-5-4zM1650 4v8l5-4z" fill="#000"/>
</svg>
<div class="r" style="left:0;top:985px;width:1680px;height:2px;background:#f0f0f0"></div>

<!-- status bar -->
<div class="r" style="left:0;top:987px;width:1680px;height:20px;background:#ccc"></div>
<div class="st" style="left:5px;width:191px"></div>
<div class="st" style="left:205px;width:164px"></div>
<div class="st" style="left:375px;width:26px"></div>
<div class="st" style="left:407px;width:31px"></div>
<div class="st" style="left:443px;width:27px"></div>
<div class="st" style="left:476px;width:26px"></div>
<div class="st" style="left:507px;width:64px"></div>
<div class="st" style="left:577px;width:42px"></div>
<div class="st" style="left:627px;width:35px"></div>
<div class="st" style="left:668px;width:26px"></div>
<div class="st" style="left:700px;width:28px"></div>
<div class="sx" style="left:11px">Стр. 1</div>
<div class="sx" style="left:78px">Разд 1</div>
<div class="sx" style="left:160px">1/1</div>
<div class="sx" style="left:206px">На 19,5см</div>
<div class="sx" style="left:269px">Ст 6</div>
<div class="sx" style="left:313px">Кол 1</div>
<div class="sx off" style="left:377px">ЗАП</div>
<div class="sx off" style="left:408px">ИСПР</div>
<div class="sx off" style="left:445px">ВДЛ</div>
<div class="sx" style="left:477px">ЗАМ</div>
<div class="sx" style="left:508px">русский (Ро</div>
<svg class="r" style="left:588px;top:990px" width="18" height="14"><path d="M1 2h6l1 1 1-1h6v9H9l-1 1-1-1H1z" fill="#ddd" stroke="#333"/><path d="M5 7l3 4 7-10" fill="none" stroke="#b02020" stroke-width="1.500"/></svg>

<!-- taskbar -->
<div class="r" style="left:0;top:1007px;width:1680px;height:43px;background:#ccc;border-top:1px solid #fff;box-sizing:border-box"></div>
<div class="btn" style="left:2px;top:1010px;width:51px;height:38px"></div>
<svg class="r" style="left:4px;top:1019px" width="18" height="20"><path d="M2 3l6-1v7l-7 1z" fill="#e05030"/><path d="M9 2l7-1v7l-7 1z" fill="#60b040"/><path d="M1 11l7-1v7l-7 1z" fill="#3a80d8"/><path d="M9 10l7-1v7l-7 1z" fill="#f0c030"/></svg>
<div class="t" style="left:20px;top:1020px;font-weight:bold;font-size:13px;line-height:18px;color:#111">Пуск</div>

<svg class="r" style="left:68px;top:1011px" width="36" height="36"><path d="M3 6h12l3 3h14v14H3z" fill="#dcb74e" stroke="#a8873a"/><path d="M2 11h30l-1 20H4z" fill="#f4e08e" stroke="#c8a84e"/><path d="M8 33V23c0-4 4-5 9-5s9 1 9 5v10h-5v-8h-8v8z" fill="#7fb0d8" stroke="#4a7aa8"/><rect x="6" y="3" width="5" height="4" fill="#5aa04a"/></svg>
<div class="btn" style="left:112px;top:1010px;width:48px;height:38px"></div>
<svg class="r" style="left:120px;top:1013px" width="32" height="32"><path d="M16 16L16 1a15 15 0 0 1 13 7.500z" fill="#f4c430"/><path d="M16 1a15 15 0 0 0-13 7.500L10 20z" fill="#d8392b"/><path d="M3 8.500A15 15 0 0 0 16 31l6-13z" fill="#3a9a4a"/><path d="M29 8.500A15 15 0 0 1 16 31l6-13 1-9.500z" fill="#f4c430"/><circle cx="16" cy="16" r="7.500" fill="#fff"/><circle cx="16" cy="16" r="5.500" fill="#4a85e0"/></svg>
<svg class="r" style="left:169px;top:1012px" width="34" height="34"><path d="M1 1h29l3 3v29H1z" fill="#1f3f9f" stroke="#14286a"/><rect x="8" y="1" width="17" height="12" fill="#d8dce8"/><rect x="17" y="3" width="5" height="8" fill="#1f3f9f"/><rect x="5" y="17" width="24" height="15" fill="#eee"/><path d="M7 21h20M7 25h20M7 29h12" stroke="#a03030"/><text x="20" y="31" font-family="Liberation Sans" font-size="6" fill="#222">БЧ</text></svg>
<svg class="r" style="left:221px;top:1015px" width="28" height="30"><rect x="4" y="1" width="22" height="28" fill="#a8cce8" stroke="#7aa0c8"/><rect x="1" y="5" width="20" height="22" fill="#d8e8f4" stroke="#90b0d0"/><circle cx="13" cy="16" r="8" fill="#f09020" stroke="#c06a10"/><path d="M10.500 11.500l7 4.500-7 4.500z" fill="#fff"/></svg>
<div class="r" style="left:262px;top:1010px;width:47px;height:38px;background:#f8f8f8;box-shadow:inset 2px 2px 0 #333,inset -1px -1px 0 #ddd"></div>
<svg class="r" style="left:272px;top:1015px" width="28" height="28"><rect x=".5" y=".5" width="27" height="27" fill="#5a86c8" stroke="#1f3a7a"/><rect x="3" y="3" width="22" height="22" fill="#e8eef8"/><text x="3" y="23" font-family="Liberation Serif" font-weight="bold" font-style="italic" font-size="24" fill="#1f3f9f">W</text></svg>

<!-- tray -->
<div class="t" style="left:1496px;top:1019px;font-size:12px;line-height:15px">RU</div>
<div class="r" style="left:1516px;top:1012px;width:1px;height:34px;background:#888"></div>
<div class="r" style="left:1520px;top:1010px;width:157px;height:38px;border:1px solid #999;box-sizing:border-box;border-right-color:#eee;border-bottom-color:#eee"></div>
<svg class="r" style="left:1522px;top:1015px" width="155" height="28">
<path d="M4 9l3-3 3 3M4 14l3-3 3 3" fill="none" stroke="#222" stroke-width="1.300"/>
<path d="M23.500 1.500v22M23.500 2.500c5-1 9 2 13 1-1 3-1 6 0 9-4 1-8-2-13-1" fill="#eee" stroke="#555"/>
<path d="M48 9h3l4-4v14l-4-4h-3zM58 7c2 3 2 7 0 10M61 5c3 4 3 10 0 14" fill="#ddd" stroke="#555"/>
<rect x="137" y="4" width="15" height="15" fill="#2a7ad0" stroke="#1a4a90"/><path d="M137 19l15-11v11z" fill="#111"/><rect x="137" y="20" width="15" height="2" fill="#333"/>
</svg>
<div class="t" style="left:1605px;top:1014px;width:40px;text-align:center;font-size:11px;line-height:14px">11:24</div>
<div class="t" style="left:1597px;top:1030px;font-size:11px;line-height:14px">16.03.2018</div>

</body></html>
